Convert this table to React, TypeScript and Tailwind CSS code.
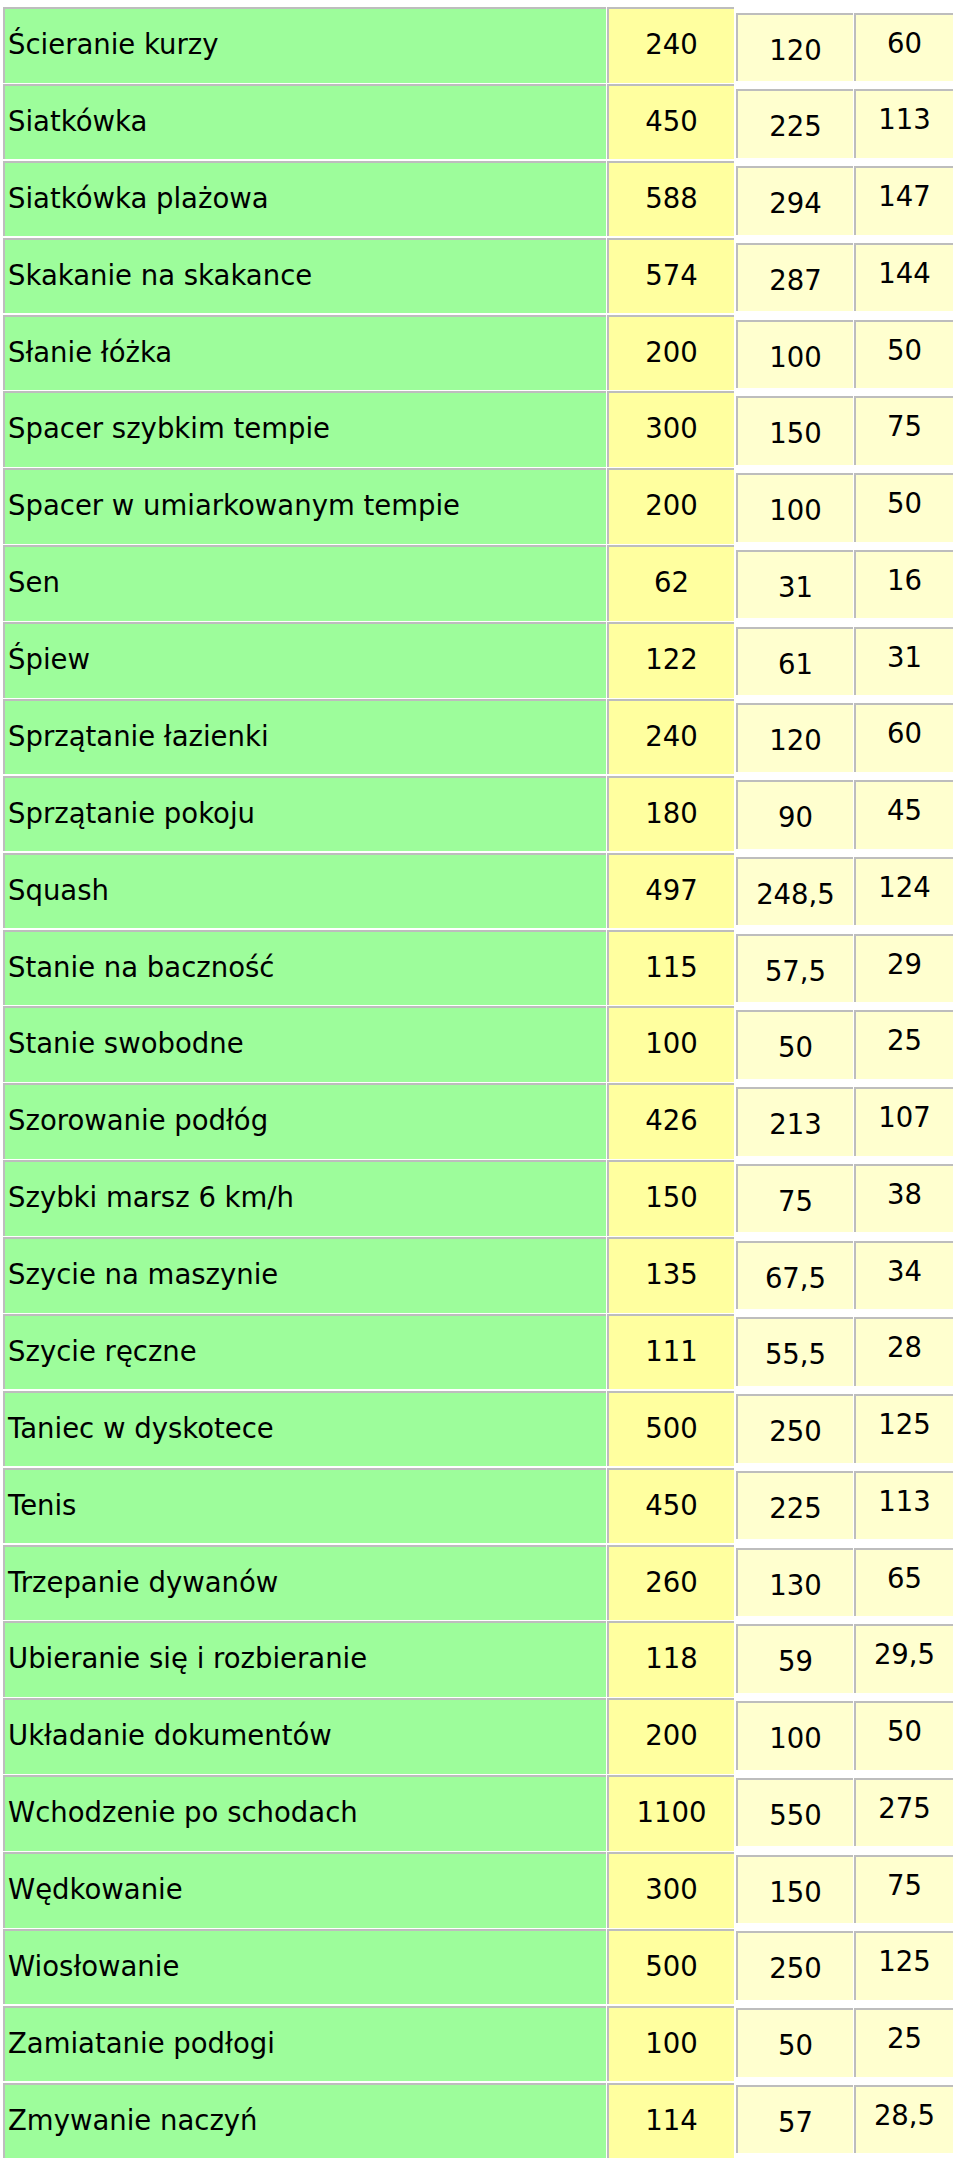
const rows: [string, string, string, string][] = [
  ['Ścieranie kurzy', '240', '120', '60'],
  ['Siatkówka', '450', '225', '113'],
  ['Siatkówka plażowa', '588', '294', '147'],
  ['Skakanie na skakance', '574', '287', '144'],
  ['Słanie łóżka', '200', '100', '50'],
  ['Spacer szybkim tempie', '300', '150', '75'],
  ['Spacer w umiarkowanym tempie', '200', '100', '50'],
  ['Sen', '62', '31', '16'],
  ['Śpiew', '122', '61', '31'],
  ['Sprzątanie łazienki', '240', '120', '60'],
  ['Sprzątanie pokoju', '180', '90', '45'],
  ['Squash', '497', '248,5', '124'],
  ['Stanie na baczność', '115', '57,5', '29'],
  ['Stanie swobodne', '100', '50', '25'],
  ['Szorowanie podłóg', '426', '213', '107'],
  ['Szybki marsz 6 km/h', '150', '75', '38'],
  ['Szycie na maszynie', '135', '67,5', '34'],
  ['Szycie ręczne', '111', '55,5', '28'],
  ['Taniec w dyskotece', '500', '250', '125'],
  ['Tenis', '450', '225', '113'],
  ['Trzepanie dywanów', '260', '130', '65'],
  ['Ubieranie się i rozbieranie', '118', '59', '29,5'],
  ['Układanie dokumentów', '200', '100', '50'],
  ['Wchodzenie po schodach', '1100', '550', '275'],
  ['Wędkowanie', '300', '150', '75'],
  ['Wiosłowanie', '500', '250', '125'],
  ['Zamiatanie podłogi', '100', '50', '25'],
  ['Zmywanie naczyń', '114', '57', '28,5'],
];

export default function App() {
  return (
    <div className="w-[960px] h-[2158px] bg-white overflow-hidden flex text-[27.5px] leading-none text-black [font-family:'DejaVu_Sans',sans-serif]">
      {/* left table: activity + kcal/h */}
      <div className="ml-[3px] mt-[7px] flex flex-col">
        {rows.map(([name, kcal]) => (
          <div key={name} className="flex h-[76.88px] shrink-0">
            <div className="w-[603px] h-[75.5px] mr-[1px] border-t-2 border-l-2 border-[#bdbdbd] bg-[#9dfd9b] flex items-center pl-[3px] pb-[2px]">
              {name}
            </div>
            <div className="w-[127px] h-[75.5px] border-t-2 border-l-2 border-[#bdbdbd] bg-[#ffff9f] flex items-center justify-center pb-[2px]">
              {kcal}
            </div>
          </div>
        ))}
      </div>

      {/* right table: 30 min / 15 min */}
      <div className="ml-[2px] mt-[12.7px] flex flex-col">
        {rows.map(([name, , half, quarter]) => (
          <div key={name} className="flex h-[76.75px] shrink-0">
            <div className="w-[117px] h-[68.5px] mr-[1px] border-t-2 border-l-2 border-[#bdbdbd] bg-[#ffffcf] flex items-center justify-center pt-[5px]">
              {half}
            </div>
            <div className="w-[99px] h-[68.5px] border-t-2 border-l-2 border-[#bdbdbd] bg-[#ffffcf] flex items-center justify-center pb-[9px]">
              {quarter}
            </div>
          </div>
        ))}
      </div>
    </div>
  );
}
